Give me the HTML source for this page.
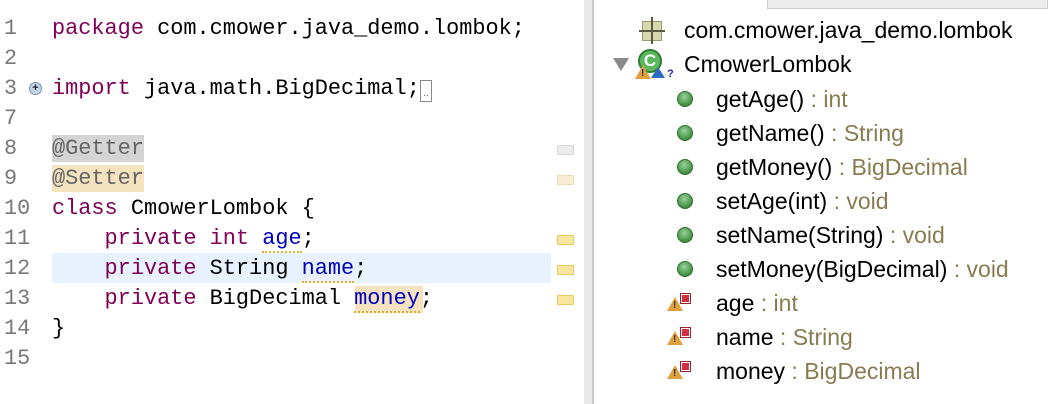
<!DOCTYPE html>
<html><head><meta charset="utf-8"><style>
body{margin:0;width:1048px;height:404px;overflow:hidden;background:#fff;position:relative;font-family:"Liberation Sans",sans-serif}
.ed{position:absolute;left:0;top:0;width:584px;height:404px;background:#fff}
.ln{position:absolute;left:0;width:40px;font:21.8px "Liberation Mono",monospace;color:#787878;padding-left:4px}
.cd{position:absolute;left:52px;font:21.9px "Liberation Mono",monospace;color:#000;white-space:pre}
.k{color:#7f0055}.f{color:#0000c0}.a{color:#646464}
.row{position:absolute;height:30px;line-height:30px}
.mk{position:absolute;left:557px;width:15px;height:8px;border-radius:1px}
.div1{position:absolute;left:584px;top:0;width:8px;height:404px;background:#e8e8e8}
.div2{position:absolute;left:592px;top:0;width:2px;height:404px;background:#c8c8c8}
.rt{position:absolute;font-size:23px;color:#000;white-space:nowrap;line-height:34px}
.t{color:#8a7a50}
.dot{position:absolute;width:16px;height:16px;border-radius:50%;background:radial-gradient(circle at 45% 35%,#9bd19b,#3f8f3f 70%);border:1px solid #2f6f2f;box-sizing:border-box}
.wt{position:absolute;width:0;height:0;border-left:8px solid transparent;border-right:8px solid transparent;border-bottom:14px solid #e0a040}
.wx{position:absolute;font:bold 10px sans-serif;color:#333}
.sq{position:absolute;width:9px;height:9px;background:#d03040;border:1px solid #fff;outline:1px solid #a02030;box-sizing:border-box}
</style></head><body>
<div class="ed">
<div style="position:absolute;left:52px;top:253px;width:499px;height:30px;background:#e8f2fe"></div>
<div style="position:absolute;left:52px;top:135px;width:92px;height:27px;background:#d4d4d4"></div>
<div style="position:absolute;left:52px;top:165px;width:92px;height:27px;background:#f5e3c0"></div>
<div style="position:absolute;left:355px;top:286px;width:68px;height:27px;background:#f5e3c0"></div>
<div class="row ln" style="top:14px">1</div><div class="row cd" style="top:14px"><span class="k">package</span> com.cmower.java_demo.lombok;</div>
<div class="row ln" style="top:44px">2</div>
<div class="row ln" style="top:74px">3</div><div style="position:absolute;left:29px;top:82px;width:13px;height:13px;border-radius:50%;background:#c5d5e8;border:1px solid #7a90b0;box-sizing:border-box;font:bold 11px/11px sans-serif;text-align:center;color:#223">+</div>
<div class="row cd" style="top:74px"><span class="k">import</span> java.math.BigDecimal;</div>
<div style="position:absolute;left:420px;top:80px;width:12px;height:22px;border:1.5px solid #888;box-sizing:border-box;font-size:10px;line-height:26px;text-align:center;color:#555">..</div>
<div class="row ln" style="top:104px">7</div>
<div class="row ln" style="top:134px">8</div><div class="row cd a" style="top:134px">@Getter</div>
<div class="row ln" style="top:164px">9</div><div class="row cd a" style="top:164px">@Setter</div>
<div class="row ln" style="top:194px">10</div><div class="row cd" style="top:194px"><span class="k">class</span> CmowerLombok {</div>
<div class="row ln" style="top:224px">11</div><div class="row cd" style="top:224px">    <span class="k">private</span> <span class="k">int</span> <span class="f" style="border-bottom:2px dotted #e0b030">age</span>;</div>
<div class="row ln" style="top:254px">12</div><div class="row cd" style="top:254px">    <span class="k">private</span> String <span class="f" style="border-bottom:2px dotted #e0b030">name</span>;</div>
<div class="row ln" style="top:284px">13</div><div class="row cd" style="top:284px">    <span class="k">private</span> BigDecimal <span class="f" style="border-bottom:2px dotted #e0b030">money</span>;</div>
<div class="row ln" style="top:314px">14</div><div class="row cd" style="top:314px">}</div>
<div class="row ln" style="top:344px">15</div>
<div class="mk" style="top:145px;background:#ececec;border:1px solid #d8d8d8"></div>
<div class="mk" style="top:175px;background:#f8ecd4;border:1px solid #f0dcb0"></div>
<div class="mk" style="top:235px;background:#f8e6a0;border:1px solid #e8c860"></div>
<div class="mk" style="top:265px;background:#f8e6a0;border:1px solid #e8c860"></div>
<div class="mk" style="top:295px;background:#f8e6a0;border:1px solid #e8c860"></div>
</div>
<div class="div1"></div><div class="div2"></div>
<div style="position:absolute;left:767px;top:0;width:281px;height:9px;background:#ececec;border:1px solid #ccc;border-top:none;box-sizing:border-box"></div>
<div style="position:absolute;left:642px;top:21px;width:20px;height:20px;background:#d8d8b0;border:1px solid #9a9a70;box-sizing:border-box"></div>
<div style="position:absolute;left:651px;top:17px;width:2px;height:27px;background:#5a5a40"></div>
<div style="position:absolute;left:639px;top:30px;width:26px;height:2px;background:#5a5a40"></div>
<div class="rt" style="left:684px;top:13px">com.cmower.java_demo.lombok</div>
<div style="position:absolute;left:613px;top:58px;width:0;height:0;border-left:8px solid transparent;border-right:8px solid transparent;border-top:13px solid #8a8a8a"></div>
<div style="position:absolute;left:638px;top:49px;width:24px;height:24px;border-radius:50%;background:#5cb85c;border:2px solid #2e7d32;box-sizing:border-box;color:#fff;font:bold 17px/20px sans-serif;text-align:center">C</div>
<div class="wt" style="left:635px;top:65px"></div><div class="wx" style="left:641px;top:68px">!</div>
<div style="position:absolute;left:651px;top:67px;width:0;height:0;border-left:7px solid transparent;border-right:7px solid transparent;border-bottom:11px solid #2a6cc0"></div>
<div style="position:absolute;left:667px;top:68px;font:bold 11px sans-serif;color:#2020a0">?</div>
<div class="rt" style="left:684px;top:47px">CmowerLombok</div>
<div class="dot" style="left:677px;top:91px"></div><div class="rt" style="left:716px;top:82px">getAge()<span class="t"> : int</span></div>
<div class="dot" style="left:677px;top:125px"></div><div class="rt" style="left:716px;top:116px">getName()<span class="t"> : String</span></div>
<div class="dot" style="left:677px;top:159px"></div><div class="rt" style="left:716px;top:150px">getMoney()<span class="t"> : BigDecimal</span></div>
<div class="dot" style="left:677px;top:193px"></div><div class="rt" style="left:716px;top:184px">setAge(int)<span class="t"> : void</span></div>
<div class="dot" style="left:677px;top:227px"></div><div class="rt" style="left:716px;top:218px">setName(String)<span class="t"> : void</span></div>
<div class="dot" style="left:677px;top:261px"></div><div class="rt" style="left:716px;top:252px">setMoney(BigDecimal)<span class="t"> : void</span></div>
<div class="wt" style="left:667px;top:297px"></div><div class="wx" style="left:673px;top:300px">!</div><div class="sq" style="left:681px;top:294px"></div>
<div class="rt" style="left:716px;top:286px">age<span class="t"> : int</span></div>
<div class="wt" style="left:667px;top:331px"></div><div class="wx" style="left:673px;top:334px">!</div><div class="sq" style="left:681px;top:328px"></div>
<div class="rt" style="left:716px;top:320px">name<span class="t"> : String</span></div>
<div class="wt" style="left:667px;top:365px"></div><div class="wx" style="left:673px;top:368px">!</div><div class="sq" style="left:681px;top:362px"></div>
<div class="rt" style="left:716px;top:354px">money<span class="t"> : BigDecimal</span></div>
</body></html>
